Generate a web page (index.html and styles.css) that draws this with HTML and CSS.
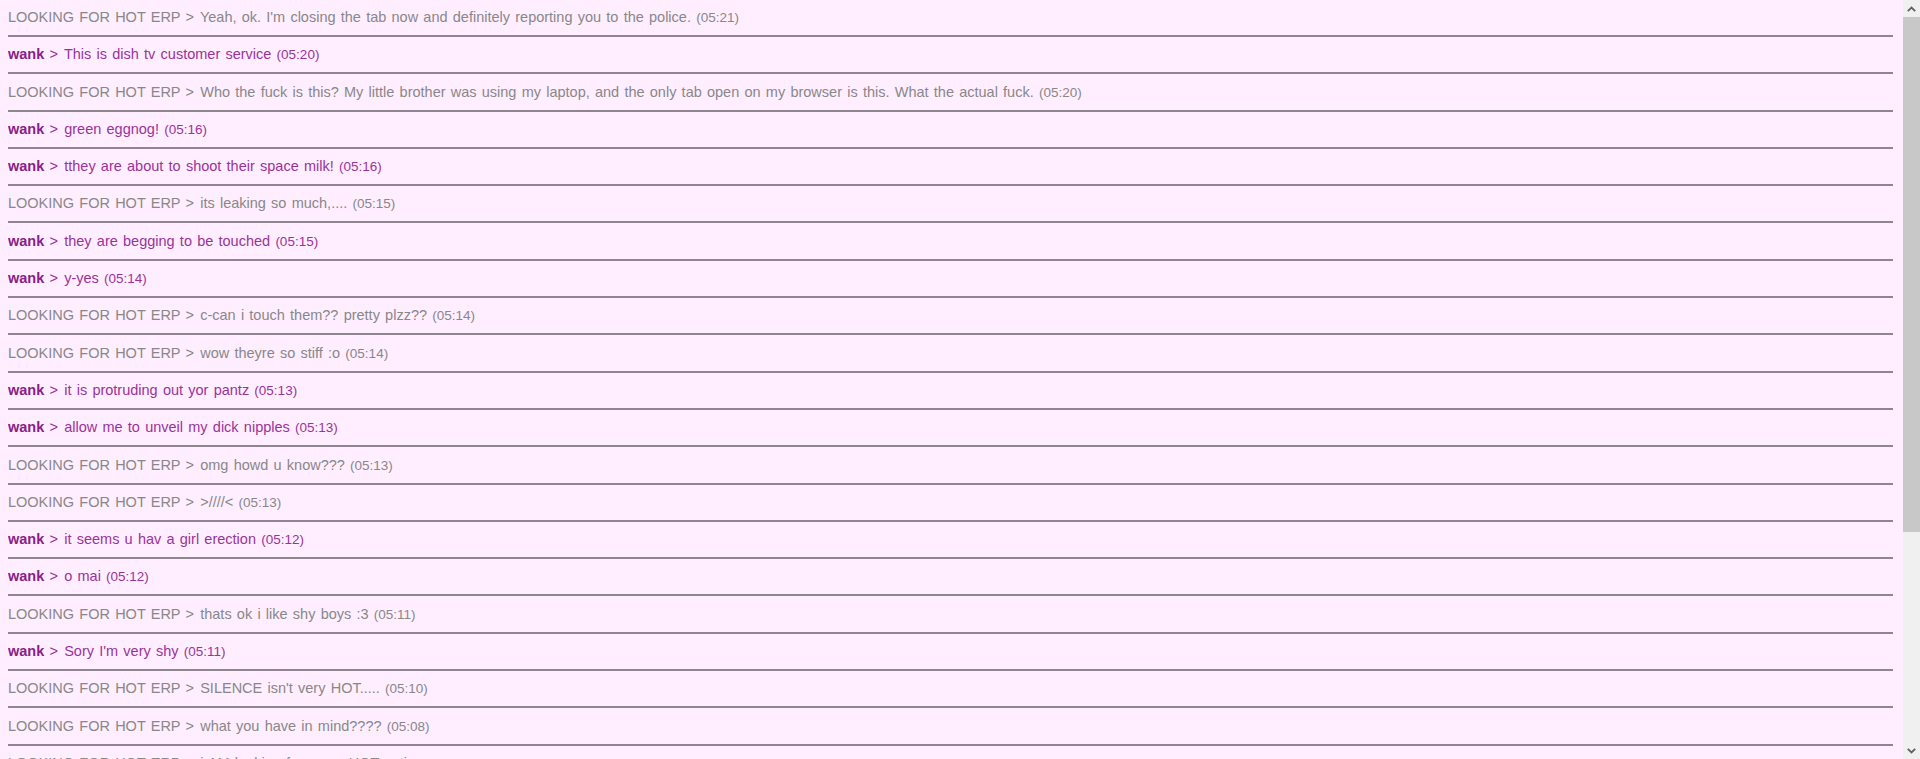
FILE: index.html
```html
<!DOCTYPE html>
<html>
<head>
  <title>Chat log</title>
  <meta charset="UTF-8">
  <link rel="stylesheet" href="styles.css">
</head>
<body>
  <div class="log">
    <div class="msg guest">LOOKING FOR HOT ERP <span class="sep">&gt;</span> Yeah, ok. I'm closing the tab now and definitely reporting you to the police. <span class="time">(05:21)</span></div>
    <div class="msg own"><b class="name">wank</b> <span class="sep">&gt;</span> This is dish tv customer service <span class="time">(05:20)</span></div>
    <div class="msg guest">LOOKING FOR HOT ERP <span class="sep">&gt;</span> Who the fuck is this? My little brother was using my laptop, and the only tab open on my browser is this. What the actual fuck. <span class="time">(05:20)</span></div>
    <div class="msg own"><b class="name">wank</b> <span class="sep">&gt;</span> green eggnog! <span class="time">(05:16)</span></div>
    <div class="msg own"><b class="name">wank</b> <span class="sep">&gt;</span> tthey are about to shoot their space milk! <span class="time">(05:16)</span></div>
    <div class="msg guest">LOOKING FOR HOT ERP <span class="sep">&gt;</span> its leaking so much,.... <span class="time">(05:15)</span></div>
    <div class="msg own"><b class="name">wank</b> <span class="sep">&gt;</span> they are begging to be touched <span class="time">(05:15)</span></div>
    <div class="msg own"><b class="name">wank</b> <span class="sep">&gt;</span> y-yes <span class="time">(05:14)</span></div>
    <div class="msg guest">LOOKING FOR HOT ERP <span class="sep">&gt;</span> c-can i touch them?? pretty plzz?? <span class="time">(05:14)</span></div>
    <div class="msg guest">LOOKING FOR HOT ERP <span class="sep">&gt;</span> wow theyre so stiff :o <span class="time">(05:14)</span></div>
    <div class="msg own"><b class="name">wank</b> <span class="sep">&gt;</span> it is protruding out yor pantz <span class="time">(05:13)</span></div>
    <div class="msg own"><b class="name">wank</b> <span class="sep">&gt;</span> allow me to unveil my dick nipples <span class="time">(05:13)</span></div>
    <div class="msg guest">LOOKING FOR HOT ERP <span class="sep">&gt;</span> omg howd u know??? <span class="time">(05:13)</span></div>
    <div class="msg guest">LOOKING FOR HOT ERP <span class="sep">&gt;</span> &gt;////&lt; <span class="time">(05:13)</span></div>
    <div class="msg own"><b class="name">wank</b> <span class="sep">&gt;</span> it seems u hav a girl erection <span class="time">(05:12)</span></div>
    <div class="msg own"><b class="name">wank</b> <span class="sep">&gt;</span> o mai <span class="time">(05:12)</span></div>
    <div class="msg guest">LOOKING FOR HOT ERP <span class="sep">&gt;</span> thats ok i like shy boys :3 <span class="time">(05:11)</span></div>
    <div class="msg own"><b class="name">wank</b> <span class="sep">&gt;</span> Sory I'm very shy <span class="time">(05:11)</span></div>
    <div class="msg guest">LOOKING FOR HOT ERP <span class="sep">&gt;</span> SILENCE isn't very HOT..... <span class="time">(05:10)</span></div>
    <div class="msg guest">LOOKING FOR HOT ERP <span class="sep">&gt;</span> what you have in mind???? <span class="time">(05:08)</span></div>
    <div class="msg guest">LOOKING FOR HOT ERP <span class="sep">&gt;</span> i AM looking for some HOT action <span class="time">(05:08)</span></div>
  </div>

  <!-- fake scrollbar, the page itself doesn't scroll in the shot -->
  <div class="scrollbar">
    <div class="sb-btn">
      <svg width="9" height="6" viewBox="0 0 9 6"><path d="M0.8 5.2 L4.5 1.5 L8.2 5.2" fill="none" stroke="#606060" stroke-width="1.8"/></svg>
    </div>
    <div class="sb-track">
      <div class="sb-thumb"></div>
    </div>
    <div class="sb-btn">
      <svg width="9" height="6" viewBox="0 0 9 6"><path d="M0.8 0.8 L4.5 4.5 L8.2 0.8" fill="none" stroke="#606060" stroke-width="1.8"/></svg>
    </div>
  </div>
</body>
</html>
```

FILE: styles.css
```css
html {
  overflow: hidden;
  background-color: #ffeeff;
}

body {
  margin: 9px 27px 0 8px;
  font-family: "Liberation Sans", Arial, sans-serif;
  font-size: 14.5px;
  color: #888;
}

.msg {
  line-height: 17px;
  padding-bottom: 9px;
  margin-bottom: 9.3px;
  border-bottom: 2px solid #8f868f;
  white-space: nowrap;
  word-spacing: 1.2px;
}

.msg.guest {
  color: #888;
}

.msg.own {
  color: #993399;
}

.name {
  color: #882288;
  font-weight: bold;
}

.sep {
  padding: 0 1px 0 0;
}

.time {
  font-size: 13.5px;
}

.scrollbar {
  position: fixed;
  top: 0;
  right: 0;
  bottom: 0;
  width: 17px;
  background-color: #f0f0f0;
  display: flex;
  flex-direction: column;
}

.sb-btn {
  height: 17px;
  display: flex;
  align-items: center;
  justify-content: center;
}

.sb-track {
  flex: 1;
}

.sb-thumb {
  height: 515px;
  width: 17px;
  background-color: #c8c8c8;
}
```
